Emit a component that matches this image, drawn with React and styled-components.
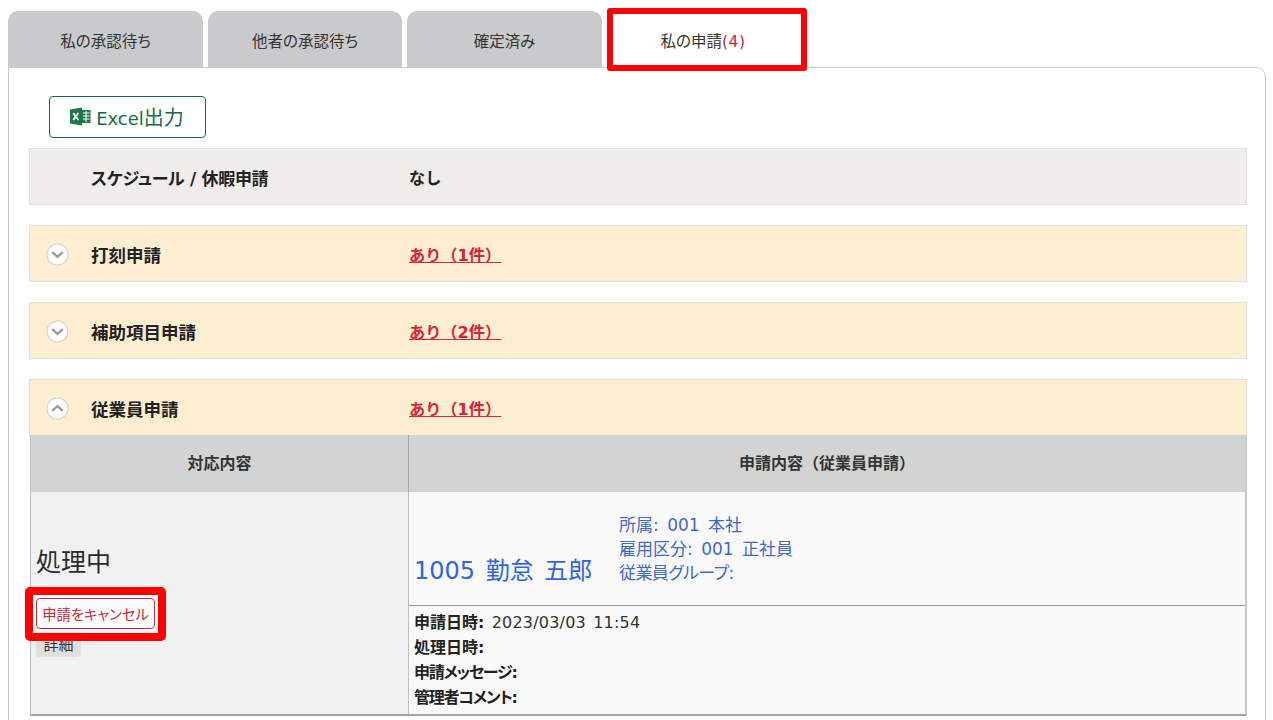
import React from 'react';
import styled, { createGlobalStyle } from 'styled-components';

const GlobalStyle = createGlobalStyle`
  html, body {
    margin: 0;
    padding: 0;
    height: 720px;
    overflow: hidden;
    background: #fff;
  }
  body {
    font-family: "DejaVu Sans", "Noto Sans CJK JP", sans-serif;
    font-feature-settings: "palt";
    color: #222;
  }
`;

const Page = styled.div`
  padding: 11px 7px 0 8px;
`;

const TabBar = styled.div`
  display: flex;
  gap: 5px;
  height: 56px;
`;

const Tab = styled.div`
  position: relative;
  width: ${(p) => p.$width}px;
  display: flex;
  align-items: center;
  justify-content: center;
  border-radius: 10px 10px 0 0;
  background: ${(p) => (p.$active ? '#fff' : '#c9cacc')};
  font-size: 15.5px;
  color: #333;
  padding: 2px ${(p) => (p.$active ? '8px' : '0')} 0 0;
  box-sizing: border-box;
`;

const Count = styled.span`
  color: #c8283c;
  letter-spacing: 0.5px;
`;

const RedFrame = styled.div`
  position: absolute;
  border: 6px solid #ff0000;
  border-radius: 3px;
  box-sizing: border-box;
  pointer-events: none;
  z-index: 2;
`;

const TabFrame = styled(RedFrame)`
  left: 0;
  top: -3px;
  width: 200px;
  height: 63px;
`;

const Panel = styled.div`
  height: 700px;
  box-sizing: border-box;
  border: 1px solid #c9cacc;
  border-radius: 0 10px 0 0;
  padding: 28px 18px 0 20px;
  background: #fff;
`;

const ExcelButton = styled.div`
  display: flex;
  align-items: center;
  justify-content: center;
  gap: 5px;
  width: 157px;
  height: 42px;
  margin-left: 20px;
  margin-bottom: 10px;
  padding: 0 1px 2px 0;
  box-sizing: border-box;
  border: 1px solid #17694a;
  border-radius: 4px;
  color: #17694a;
  font-size: 18px;
`;

const ExcelKanji = styled.span`
  font-size: 20px;
`;

const Section = styled.div`
  margin-bottom: 20px;
`;

const SectionHead = styled.div`
  display: flex;
  align-items: center;
  height: 57px;
  box-sizing: border-box;
  border: 1px solid #e3e0da;
  padding-top: 1px;
  background: ${(p) => (p.$muted ? '#eeedec' : '#feeed1')};
`;

const ChevronSlot = styled.div`
  width: 45px;
  flex: none;
  display: flex;
  padding-left: 16px;
`;

const SectionTitle = styled.div`
  width: 318px;
  flex: none;
  font-size: ${(p) => (p.$tight ? '17px' : '17.5px')};
  letter-spacing: ${(p) => (p.$tight ? '-0.3px' : '0')};
  font-weight: 700;
  color: #222;
`;

const SectionValue = styled.div`
  font-size: 16.2px;
  font-weight: 700;
  font-feature-settings: normal;
`;

const CountLink = styled.span`
  color: #d9233a;
  text-decoration: underline;
`;

const Detail = styled.div`
  display: grid;
  grid-template-columns: 377px 1fr;
  margin-left: 1px;
  border-bottom: 2px solid #a3a3a3;
  border-right: 2px solid #c8c8c8;
  border-left: 1px solid #c0c0c0;
  box-sizing: border-box;
  width: 1217px;
  margin-top: -1px;
`;

const HeadCell = styled.div`
  height: 57px;
  display: flex;
  align-items: center;
  justify-content: center;
  padding-bottom: 3px;
  background: #d2d4d4;
  font-size: 16px;
  font-weight: 700;
  font-feature-settings: normal;
  color: #333;
  box-sizing: border-box;
  border-left: ${(p) => (p.$split ? '1px solid #a8a8a8' : 'none')};
`;

const ActionCell = styled.div`
  height: 222px;
  background: #f1f1f1;
  box-sizing: border-box;
  padding: 53px 5px 0 5px;
`;

const StatusText = styled.div`
  font-size: 25px;
  line-height: 36px;
  color: #2b2b2b;
  margin-bottom: 17px;
`;

const CancelWrap = styled.div`
  position: relative;
  width: 119px;
`;

const CancelFrame = styled(RedFrame)`
  left: -11px;
  top: -11px;
  width: 141px;
  height: 54px;
  border-width: 8px;
  border-radius: 5px;
`;

const CancelButton = styled.div`
  position: relative;
  z-index: 1;
  width: 119px;
  height: 31px;
  box-sizing: border-box;
  border: 1px solid #c8283c;
  border-radius: 4px;
  background: #fff;
  outline: 3px solid #fff;
  color: #c8283c;
  font-size: 14.3px;
  display: flex;
  align-items: center;
  justify-content: center;
  white-space: nowrap;
`;

const DetailTag = styled.div`
  width: 45px;
  height: 27px;
  margin-top: 1px;
  background: #dfdfdf;
  border-radius: 4px;
  display: flex;
  align-items: center;
  justify-content: center;
  font-size: 15px;
  color: #333;
  box-sizing: border-box;
`;

const RequestCell = styled.div`
  height: 222px;
  display: flex;
  flex-direction: column;
  background: #f9f9f9;
  border-left: 1px solid #c0c0c0;
  box-sizing: border-box;
`;

const Person = styled.div`
  height: 114px;
  display: flex;
  align-items: flex-end;
  padding: 0 0 16px 5px;
  box-sizing: border-box;
  border-bottom: 1px solid #969696;
`;

const PersonName = styled.div`
  width: 205px;
  flex: none;
  font-size: 24px;
  line-height: 36px;
  word-spacing: 3px;
  color: #3264dc;
`;

const PersonMeta = styled.div`
  font-size: 17px;
  line-height: 24px;
  word-spacing: 3px;
  color: #4169c8;
  margin-bottom: 4px;
`;

const MetaLine = styled.div`
  letter-spacing: ${(p) => (p.$tight ? '-0.6px' : '0')};
`;

const Facts = styled.div`
  padding: 4px 5px 0;
  font-size: 16px;
  line-height: 25px;
  letter-spacing: 0.2px;
  word-spacing: 2px;
  color: #333;
`;

const FactRow = styled.div`
  height: 25px;
`;

const FactLabel = styled.b`
  color: #222;
  letter-spacing: ${(p) => (p.$tight ? '-1.2px' : '0')};
`;

const ExcelIcon = () => (
  <svg width="21" height="21" viewBox="0 0 21 20">
    <path fill="#1d7a46" d="M0 3 L12 1 V19 L0 17 Z" />
    <rect x="12" y="3.5" width="8.5" height="13" fill="#1d7a46" />
    <path stroke="#fff" strokeWidth="1" d="M13 6.5H19.5M13 9.5H19.5M13 12.5H19.5M16 4.5V15.5" fill="none" />
    <path stroke="#fff" strokeWidth="1.8" d="M3.2 6.5L8.4 13.5M8.4 6.5L3.2 13.5" fill="none" />
  </svg>
);

const Chevron = ({ up }) => (
  <svg width="23" height="23" viewBox="0 0 24 24">
    <circle cx="12" cy="12" r="11" fill="#fff" stroke="#d4d4d4" strokeWidth="1.2" />
    <path
      d={up ? 'M6.5 14.5L12 9.5L17.5 14.5' : 'M6.5 9.5L12 14.5L17.5 9.5'}
      fill="none"
      stroke="#9a9a9a"
      strokeWidth="2.4"
    />
  </svg>
);

const tabs = [
  { label: '私の承認待ち', width: 195 },
  { label: '他者の承認待ち', width: 194 },
  { label: '確定済み', width: 195 },
];

const sections = [
  { title: '打刻申請', value: 'あり（1件）' },
  { title: '補助項目申請', value: 'あり（2件）' },
];

export default function App() {
  return (
    <Page>
      <GlobalStyle />
      <TabBar>
        {tabs.map((t) => (
          <Tab key={t.label} $width={t.width}>{t.label}</Tab>
        ))}
        <Tab $active $width={200}>
          <TabFrame />
          <span>私の申請<Count>(4)</Count></span>
        </Tab>
      </TabBar>
      <Panel>
        <ExcelButton><ExcelIcon /><span>Excel<ExcelKanji>出力</ExcelKanji></span></ExcelButton>
        <Section>
          <SectionHead $muted>
            <ChevronSlot />
            <SectionTitle $tight>スケジュール / 休暇申請</SectionTitle>
            <SectionValue>なし</SectionValue>
          </SectionHead>
        </Section>
        {sections.map((s) => (
          <Section key={s.title}>
            <SectionHead>
              <ChevronSlot><Chevron /></ChevronSlot>
              <SectionTitle>{s.title}</SectionTitle>
              <SectionValue><CountLink>{s.value}</CountLink></SectionValue>
            </SectionHead>
          </Section>
        ))}
        <Section>
          <SectionHead>
            <ChevronSlot><Chevron up /></ChevronSlot>
            <SectionTitle>従業員申請</SectionTitle>
            <SectionValue><CountLink>あり（1件）</CountLink></SectionValue>
          </SectionHead>
          <Detail>
            <HeadCell>対応内容</HeadCell>
            <HeadCell $split>申請内容（従業員申請）</HeadCell>
            <ActionCell>
              <StatusText>処理中</StatusText>
              <CancelWrap>
                <CancelFrame />
                <CancelButton>申請をキャンセル</CancelButton>
              </CancelWrap>
              <DetailTag>詳細</DetailTag>
            </ActionCell>
            <RequestCell>
              <Person>
                <PersonName>1005 勤怠 五郎</PersonName>
                <PersonMeta>
                  <MetaLine>所属: 001 本社</MetaLine>
                  <MetaLine>雇用区分: 001 正社員</MetaLine>
                  <MetaLine $tight>従業員グループ:</MetaLine>
                </PersonMeta>
              </Person>
              <Facts>
                <FactRow><FactLabel>申請日時:</FactLabel> 2023/03/03 11:54</FactRow>
                <FactRow><FactLabel>処理日時:</FactLabel></FactRow>
                <FactRow><FactLabel $tight>申請メッセージ:</FactLabel></FactRow>
                <FactRow><FactLabel $tight>管理者コメント:</FactLabel></FactRow>
              </Facts>
            </RequestCell>
          </Detail>
        </Section>
      </Panel>
    </Page>
  );
}
